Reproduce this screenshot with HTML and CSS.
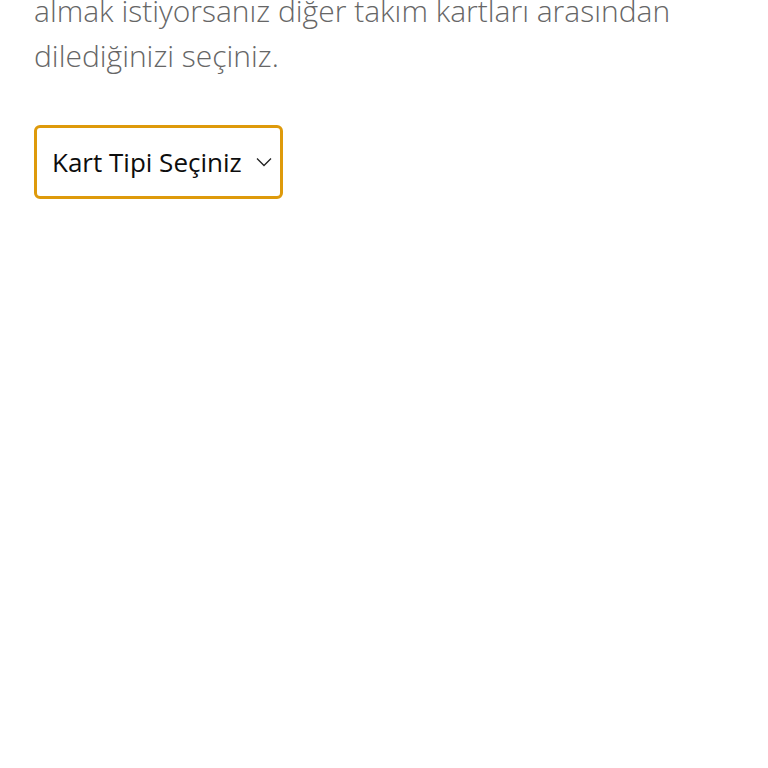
FILE: index.html
```html
<!DOCTYPE html>
<html lang="tr">
<head>
  <meta charset="UTF-8" />
  <meta name="viewport" content="width=device-width, initial-scale=1.0" />
  <title>Kart Seçimi</title>
  <link rel="stylesheet" href="styles.css">
</head>
<body>
  <div class="page">
    <p class="intro">almak istiyorsanız diğer takım kartları arasından dilediğinizi seçiniz.</p>

    <div class="card-select" role="button" tabindex="0">
      <span class="card-select-label">Kart Tipi Seçiniz</span>
      <svg class="card-select-arrow" width="16" height="10" viewBox="0 0 16 10" aria-hidden="true">
        <path d="M1 1.5 L8 8.5 L15 1.5" fill="none" stroke="#222" stroke-width="1.3" />
      </svg>
    </div>
  </div>
</body>
</html>
```

FILE: styles.css
```css
* {
  box-sizing: border-box;
}

body {
  margin: 0;
  background: #fff;
  font-family: "Open Sans", "Noto Sans", sans-serif;
}

.page {
  padding: 0 34px;
}

/* paragraph continues from above the fold */
.intro {
  margin: -12px 0 0;
  max-width: 700px;
  font-size: 30px;
  font-weight: 300;
  line-height: 45px;
  color: #666;
}

.card-select {
  display: flex;
  align-items: center;
  justify-content: space-between;
  width: 249px;
  height: 74px;
  margin-top: 47px;
  padding: 0 8px 0 15px;
  border: 3px solid #de9a0b;
  border-radius: 6px;
  cursor: pointer;
}

.card-select-label {
  font-size: 26px;
  color: #0d0d0d;
}

.card-select-arrow {
  flex-shrink: 0;
}
```
